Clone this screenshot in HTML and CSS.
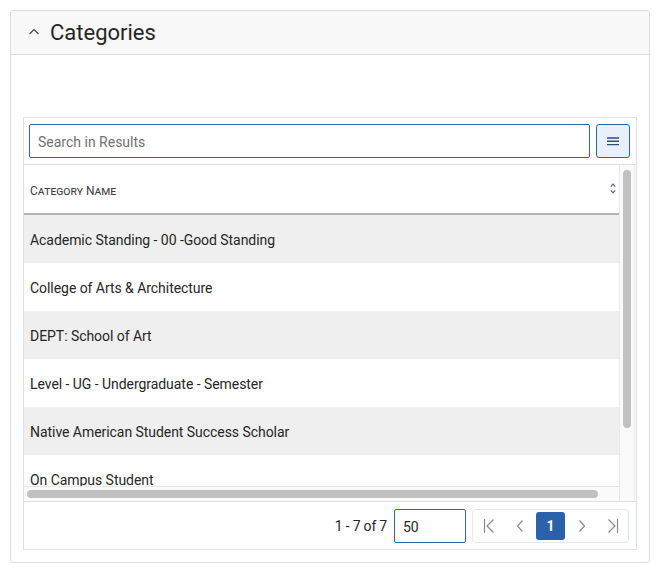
FILE: index.html
```html
<!DOCTYPE html>
<html>
<head>
<meta charset="utf-8">
<link rel="stylesheet" href="styles.css">
</head>
<body>
<div class="region">
  <div class="region-header">
    <svg class="chev" width="12" height="8" viewBox="0 0 12 8"><polyline points="1.5,6 6,1.6 10.5,6" fill="none" stroke="#404040" stroke-width="1.1"/></svg>
    <h2 class="title">Categories</h2>
  </div>
  <div class="region-body">
    <div class="report">
      <div class="toolbar">
        <input class="search" type="text" placeholder="Search in Results">
        <button class="menu-btn"><svg width="14" height="10" viewBox="0 0 14 10"><path d="M1 2h12M1 5.3h12M1 8.6h12" stroke="#2d4c7c" stroke-width="1.4"/></svg></button>
      </div>
      <div class="grid">
        <div class="viewport">
          <div class="thead">
            <span class="th-label">Category Name</span>
            <svg class="sort" width="6" height="11" viewBox="0 0 6 11"><polyline points="0.8,3.6 3,1.2 5.2,3.6" fill="none" stroke="#4a6390" stroke-width="1.2"/><polyline points="0.8,7.4 3,9.8 5.2,7.4" fill="none" stroke="#4a6390" stroke-width="1.2"/></svg>
          </div>
          <div class="row alt">Academic Standing - 00 -Good Standing</div>
          <div class="row">College of Arts &amp; Architecture</div>
          <div class="row alt">DEPT: School of Art</div>
          <div class="row">Level - UG - Undergraduate - Semester</div>
          <div class="row alt">Native American Student Success Scholar</div>
          <div class="row">On Campus Student</div>
        </div>
        <div class="vscroll"><div class="vthumb"></div></div>
        <div class="hscroll"><div class="hthumb"></div></div>
      </div>
      <div class="footer">
        <span class="range">1 - 7 of 7</span>
        <input class="rows-input" type="text" value="50">
        <div class="pager">
          <button class="pg"><svg width="12" height="16" viewBox="0 0 12 16"><path d="M1.5 1v14" stroke="#8a8a8a" stroke-width="1.2"/><polyline points="10.5,1.5 4,8 10.5,14.5" fill="none" stroke="#8a8a8a" stroke-width="1.2"/></svg></button>
          <button class="pg"><svg width="10" height="16" viewBox="0 0 10 16"><polyline points="7.5,2.5 2.5,8 7.5,13.5" fill="none" stroke="#8a8a8a" stroke-width="1.2"/></svg></button>
          <button class="pg current">1</button>
          <button class="pg"><svg width="10" height="16" viewBox="0 0 10 16"><polyline points="2.5,2.5 7.5,8 2.5,13.5" fill="none" stroke="#8a8a8a" stroke-width="1.2"/></svg></button>
          <button class="pg"><svg width="12" height="16" viewBox="0 0 12 16"><polyline points="1.5,1.5 8,8 1.5,14.5" fill="none" stroke="#8a8a8a" stroke-width="1.2"/><path d="M10.5 1v14" stroke="#8a8a8a" stroke-width="1.2"/></svg></button>
        </div>
      </div>
    </div>
  </div>
</div>
</body>
</html>
```

FILE: styles.css
```css
* { box-sizing: border-box; }
html, body { margin: 0; padding: 0; background: #fff; }
body {
  padding: 10px;
  font-family: Roboto, "Liberation Sans", sans-serif;
  color: #262626;
}
.region {
  border: 1px solid #dcdcdc;
  border-radius: 3px;
  background: #fff;
}
.region-header {
  height: 44px;
  background: #f8f8f8;
  border-bottom: 1px solid #dcdcdc;
  border-radius: 3px 3px 0 0;
  display: flex;
  align-items: center;
  padding-left: 17px;
}
.chev { display: block; margin-right: 10px; margin-top: -2px; }
.title {
  margin: 0;
  font-size: 22px;
  font-weight: 400;
  color: #262626;
  line-height: 1;
}
.region-body { padding: 62px 12px 12px 12px; }
.report {
  border: 1px solid #dfdfdf;
  background: #fff;
}
.toolbar {
  display: flex;
  gap: 6px;
  padding: 6px 6px 6px 5px;
  border-bottom: 1px solid #dfdfdf;
}
.search {
  flex: 1;
  height: 34px;
  border: 1px solid #2d63a9;
  border-radius: 2px;
  padding: 1px 8px 0;
  font-family: Roboto, "Liberation Sans", sans-serif;
  font-size: 14px;
  color: #262626;
  outline: none;
}
.search::placeholder { color: #707070; }
.menu-btn {
  width: 34px;
  height: 34px;
  border: 1px solid #2d63a9;
  border-radius: 3px;
  background: #e9f0fb;
  display: flex;
  align-items: center;
  justify-content: center;
  padding: 0;
}
.menu-btn svg { display: block; }
.grid {
  display: grid;
  grid-template-columns: 595px 1fr;
  grid-template-rows: 321px 15px;
}
.viewport { overflow: hidden; }
.thead {
  height: 50px;
  border-bottom: 2px solid #b3b3b3;
  display: flex;
  align-items: center;
  justify-content: space-between;
  padding: 0 3px 0 6px;
}
.th-label {
  font-size: 12px;
  font-variant: small-caps;
  color: #404040;
  margin-top: 3px;
}
.sort { display: block; margin-top: -1px; }
.row {
  height: 48px;
  display: flex;
  align-items: center;
  padding: 2px 0 0 6px;
  font-size: 14px;
  letter-spacing: -0.05px;
  color: #262626;
  white-space: nowrap;
}
.row.alt { background: #efefef; }
.vscroll {
  background: #fafafa;
  border-left: 1px solid #e8e8e8;
  border-right: 1px solid #e8e8e8;
  margin-right: 1px;
  grid-row: 1 / 3;
  grid-column: 2;
  padding: 5px 2px 0 3px;
}
.vthumb {
  width: 8px;
  height: 258px;
  border-radius: 4px;
  background: #c1c1c1;
}
.hscroll {
  grid-row: 2;
  grid-column: 1;
  border-top: 1px solid #e6e6e6;
  background: #fafafa;
  padding: 3px 0 0 3px;
}
.hthumb {
  width: 571px;
  height: 8px;
  border-radius: 4px;
  background: #c1c1c1;
}
.footer {
  border-top: 1px solid #dfdfdf;
  display: flex;
  align-items: center;
  justify-content: flex-end;
  padding: 7px 7px 6px 7px;
}
.range {
  font-size: 14px;
  letter-spacing: -0.2px;
  color: #262626;
  margin-right: 7px;
}
.rows-input {
  width: 72px;
  height: 34px;
  border: 1px solid #2d63a9;
  border-radius: 2px;
  padding: 1px 8px 0;
  font-family: Roboto, "Liberation Sans", sans-serif;
  font-size: 14px;
  color: #262626;
  margin-right: 6px;
  outline: none;
}
.pager {
  display: flex;
  gap: 2px;
  padding: 2px 1px;
  border: 1px solid #e1e9f5;
  border-radius: 4px;
  height: 34px;
}
.pg {
  width: 29px;
  height: 28px;
  border: 0;
  background: transparent;
  display: flex;
  align-items: center;
  justify-content: center;
  padding: 0;
  border-radius: 3px;
  font-family: Roboto, "Liberation Sans", sans-serif;
}
.pg svg { display: block; }
.pg.current {
  background: #2b60ab;
  color: #fff;
  font-weight: 700;
  font-size: 14px;
}
```
